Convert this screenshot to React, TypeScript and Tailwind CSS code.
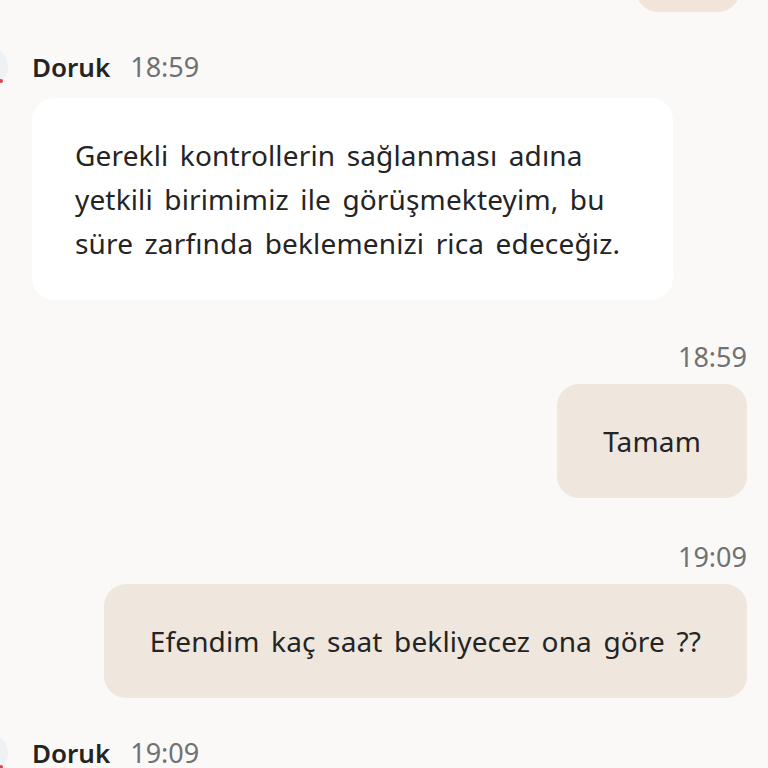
import React from "react";

const font = { fontFamily: '"Noto Sans", "Open Sans", sans-serif' };

function Header({ name, time }: { name: string; time: string }) {
  return (
    <div className="flex h-[32px] items-center">
      {/* avatar, mostly off-screen */}
      <div className="relative -ml-[64px] mr-[24px] size-[40px] shrink-0 rounded-full bg-[#eef2f5]">
        <span className="absolute right-[5px] bottom-[4px] size-[4px] rounded-full bg-[#e0464f]" />
      </div>
      <span className="text-[26px] font-semibold leading-[32px] text-[#242424]">{name}</span>
      <span className="ml-[20px] text-[27px] leading-[32px] text-[#717171]">{time}</span>
    </div>
  );
}

function Mine({ time, text }: { time: string; text: string }) {
  return (
    <div className="flex flex-col items-end">
      <span className="h-[28px] text-[27px] leading-[28px] text-[#717171]">{time}</span>
      <div className="mt-[13px] rounded-[22px] bg-[#efe6dd] px-[46px] py-[35px] text-[28px] leading-[44px] tracking-[0.15px] [word-spacing:4px] text-[#242424]">
        {text}
      </div>
    </div>
  );
}

export default function App() {
  return (
    <div style={font} className="h-[768px] w-[768px] overflow-hidden bg-[#faf9f8] pl-[32px] pr-[21px]">
      {/* tail of the previous bubble */}
      <div className="flex justify-end pr-[7px]">
        <div className="-mt-[48px] h-[60px] w-[104px] rounded-[22px] bg-[#f2e4d9]" />
      </div>

      <div className="mt-[39px]">
        <Header name="Doruk" time="18:59" />
        <div className="mt-[15px] w-[641px] rounded-[22px] bg-white py-[35px] pl-[43px] pr-[30px] text-[28px] leading-[44px] tracking-[0.15px] [word-spacing:4px] text-[#242424]">
          Gerekli kontrollerin sağlanması adına
          <br />
          yetkili birimimiz ile görüşmekteyim, bu
          <br />
          süre zarfında beklemenizi rica edeceğiz.
        </div>
      </div>

      <div className="mt-[43px]">
        <Mine time="18:59" text="Tamam" />
      </div>

      <div className="mt-[45px]">
        <Mine time="19:09" text="Efendim kaç saat bekliyecez ona göre ??" />
      </div>

      <div className="mt-[39px]">
        <Header name="Doruk" time="19:09" />
      </div>
    </div>
  );
}
